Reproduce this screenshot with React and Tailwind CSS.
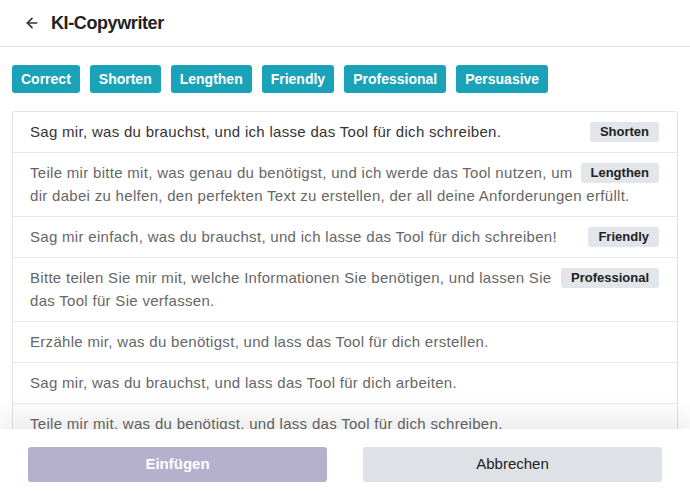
import { ArrowLeft } from 'lucide-react'

const tones = ['Correct', 'Shorten', 'Lengthen', 'Friendly', 'Professional', 'Persuasive']

const results = [
  { text: 'Sag mir, was du brauchst, und ich lasse das Tool für dich schreiben.', tag: 'Shorten', dark: true },
  { text: 'Teile mir bitte mit, was genau du benötigst, und ich werde das Tool nutzen, um dir dabei zu helfen, den perfekten Text zu erstellen, der all deine Anforderungen erfüllt.', tag: 'Lengthen' },
  { text: 'Sag mir einfach, was du brauchst, und ich lasse das Tool für dich schreiben!', tag: 'Friendly' },
  { text: 'Bitte teilen Sie mir mit, welche Informationen Sie benötigen, und lassen Sie das Tool für Sie verfassen.', tag: 'Professional' },
  { text: 'Erzähle mir, was du benötigst, und lass das Tool für dich erstellen.' },
  { text: 'Sag mir, was du brauchst, und lass das Tool für dich arbeiten.' },
  { text: 'Teile mir mit, was du benötigst, und lass das Tool für dich schreiben.' },
  { text: 'Lass mich wissen, was du brauchst, und das Tool schreibt es für dich.' },
]

export default function App() {
  return (
    <div className="h-[491px] w-[690px] flex flex-col bg-white overflow-hidden font-['Liberation_Sans',Arial,sans-serif]">
      {/* Header */}
      <div className="h-[47px] shrink-0 flex items-center gap-[11px] px-[24px] border-b border-[#e3e3e3]">
        <ArrowLeft size={16} strokeWidth={2.5} className="text-[#333]" />
        <h1 className="text-[18px] font-bold text-[#222] tracking-[-0.4px]">KI-Copywriter</h1>
      </div>

      {/* Tone chips */}
      <div className="shrink-0 flex gap-[10px] px-3 pt-[18px] pb-[18px]">
        {tones.map((t) => (
          <button
            key={t}
            className="h-[28px] px-[9px] rounded-[3px] bg-[#1aa3b8] text-white text-[14px] font-bold"
          >
            {t}
          </button>
        ))}
      </div>

      {/* Results */}
      <div className="flex-1 min-h-0 overflow-hidden px-3">
        <div className="border border-[#e2e2e2] rounded-[3px]">
          {results.map((r, i) => (
            <div
              key={i}
              className="pl-[17px] pr-[18px] pt-2 pb-[9px] border-b border-[#e6e6e6] last:border-b-0 flow-root"
            >
              {r.tag && (
                <span className="float-right ml-1 mt-[2px] h-[20px] px-[10px] rounded-[3px] bg-[#e2e5ea] text-[13px] font-bold text-[#222] leading-[20px]">
                  {r.tag}
                </span>
              )}
              <p className={`text-[15px] leading-[23px] tracking-[0.3px] ${r.dark ? 'text-[#333]' : 'text-[#666]'}`}>
                {r.text}
              </p>
            </div>
          ))}
        </div>
      </div>

      {/* Footer */}
      <div className="shrink-0 h-[62px] relative bg-white flex gap-9 px-7 pt-[18px] shadow-[0_-14px_22px_rgba(0,0,0,0.07)]">
        <button className="flex-1 h-[35px] rounded-[3px] bg-[#b6b0cf] text-white text-[15px] font-bold">
          Einfügen
        </button>
        <button className="flex-1 h-[35px] rounded-[3px] bg-[#dee1e6] text-[#222] text-[15px]">
          Abbrechen
        </button>
      </div>
    </div>
  )
}
